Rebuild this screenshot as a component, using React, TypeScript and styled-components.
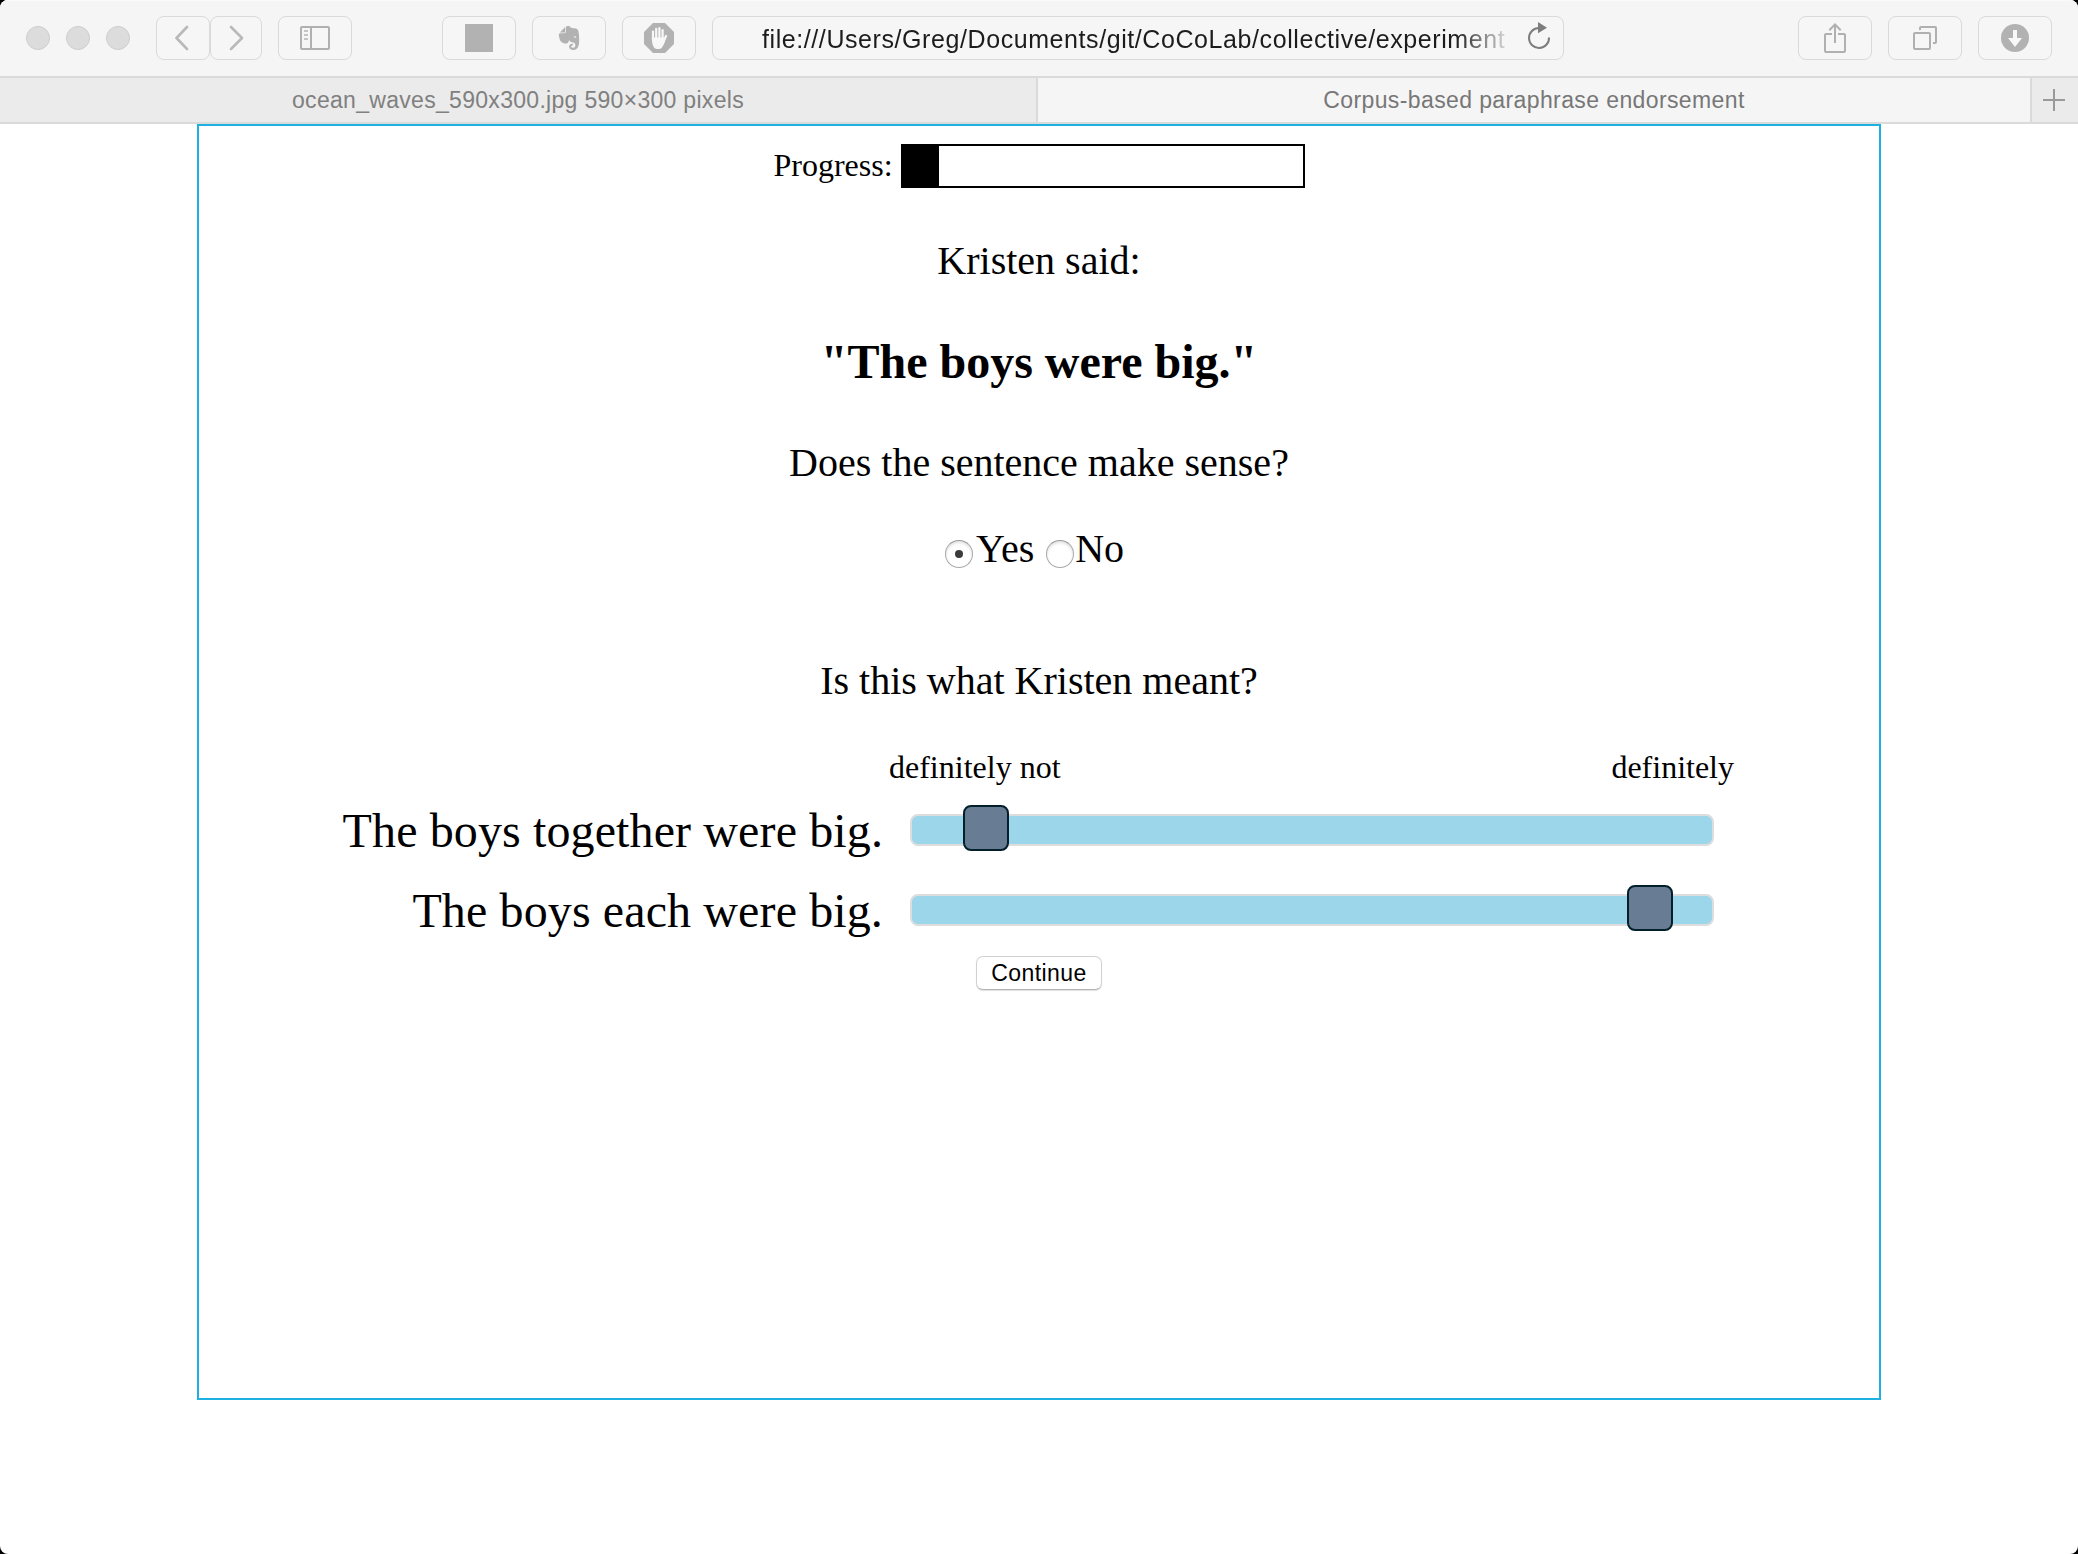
import React, { useState } from "react";
import styled, { createGlobalStyle } from "styled-components";
import { SiEvernote } from "react-icons/si";

const GlobalStyle = createGlobalStyle`
  *, *::before, *::after { box-sizing: border-box; }
  html { background: #000; }
  body { margin: 0; background: #000; }
`;

const sans = `"Liberation Sans", Arial, Helvetica, sans-serif`;
const serif = `"Liberation Serif", "Times New Roman", Times, serif`;

const BrowserWindow = styled.div`
  display: flex;
  flex-direction: column;
  width: 2078px;
  height: 1554px;
  overflow: hidden;
  border-radius: 8px;
  background: #fff;
`;

/* ---------- toolbar ---------- */

const Toolbar = styled.header`
  display: flex;
  align-items: center;
  flex: none;
  height: 78px;
  padding: 0 26px 1px 26px;
  background: #f5f5f5;
  border-top: 1px solid #fafafa;
  border-bottom: 2px solid #dadada;
`;

const TrafficLights = styled.div`
  display: flex;
  gap: 16px;
  margin-right: 26px;
`;

const Light = styled.span`
  width: 24px;
  height: 24px;
  border-radius: 50%;
  background: #dcdcdc;
  border: 1px solid #cdcdcd;
`;

const ToolButton = styled.button<{ $width?: number }>`
  display: flex;
  align-items: center;
  justify-content: center;
  flex: none;
  width: ${(p) => p.$width ?? 74}px;
  height: 44px;
  padding: 0;
  border: 1px solid #dadada;
  border-radius: 8px;
  background: #f6f6f6;
  color: #b2b2b2;

  svg {
    display: block;
  }
`;

const ButtonGroup = styled.div<{ $gap?: number; $after?: number }>`
  display: flex;
  gap: ${(p) => p.$gap ?? 16}px;
  margin-right: ${(p) => p.$after ?? 0}px;
`;

const AddressBar = styled.div`
  display: flex;
  align-items: center;
  width: 852px;
  height: 44px;
  padding: 0 12px 0 49px;
  border: 1px solid #dadada;
  border-radius: 8px;
  background: #f6f6f6;
  margin-right: 234px;
  color: #7d7d7d;

  svg {
    flex: none;
    margin-bottom: 4px;
  }
`;

const Address = styled.span`
  flex: 1;
  overflow: hidden;
  white-space: nowrap;
  padding-top: 2px;
  font: 25px/40px ${sans};
  letter-spacing: 0.58px;
  color: #1c1c1c;
  mask-image: linear-gradient(to right, #000 694px, transparent 752px);
`;

/* ---------- tabs ---------- */

const TabBar = styled.nav`
  display: flex;
  flex: none;
  height: 46px;
  border-bottom: 2px solid #dadada;
  background: #ebebeb;
`;

const Tab = styled.div<{ $width: number; $active?: boolean }>`
  width: ${(p) => p.$width}px;
  border-right: 2px solid #dadada;
  background: ${(p) => (p.$active ? "#f5f5f5" : "#ebebeb")};
  color: ${(p) => (p.$active ? "#777" : "#808080")};
  font: 23px/45px ${sans};
  letter-spacing: ${(p) => (p.$active ? 0.39 : 0.3)}px;
  text-align: center;
  white-space: nowrap;
`;

const NewTab = styled.button`
  display: flex;
  flex: 1;
  align-items: center;
  justify-content: center;
  padding: 0 2px 0 0;
  border: 0;
  background: transparent;
  color: #9a9a9a;
`;

/* ---------- experiment slide ---------- */

const Slide = styled.main`
  display: flex;
  flex-direction: column;
  align-items: center;
  width: 1684px;
  height: 1276px;
  margin-left: 197px;
  padding-top: 18px;
  border: 2px solid #1fb0e2;
  color: #000;
  font-family: ${serif};
`;

const Progress = styled.div`
  display: flex;
  align-items: center;
  gap: 8px;
  height: 44px;
  font-size: 32px;
  line-height: 42px;
`;

const ProgressLabel = styled.span`
  padding-bottom: 2px;
`;

const ProgressTrack = styled.div`
  width: 404px;
  height: 44px;
  border: 2px solid #000;
`;

const ProgressFill = styled.div`
  height: 100%;
  background: #000;
`;

const Prompt = styled.p<{ $before: number }>`
  margin: ${(p) => p.$before}px 0 0;
  font-size: 40px;
  line-height: 48px;
`;

const Sentence = styled.h1`
  margin: 49px 0 0;
  font-size: 48px;
  line-height: 56px;
  font-weight: bold;
`;

const Choices = styled.div`
  display: flex;
  align-items: flex-start;
  gap: 12px;
  width: 188px;
  height: 48px;
  margin: 38px 0 0 0;
  font-size: 40px;
  line-height: 48px;
`;

const Choice = styled.label<{ $gap: number }>`
  display: flex;
  gap: ${(p) => p.$gap}px;
`;

const Radio = styled.input`
  appearance: none;
  display: grid;
  place-items: center;
  width: 28px;
  height: 28px;
  margin: 15px 0 0;
  border: 1px solid #a9a9a9;
  border-top-color: #989898;
  border-radius: 50%;
  background: #fff;
  box-shadow: inset 0 2px 3px #e2e2e2;

  &:checked::before {
    content: "";
    width: 8px;
    height: 8px;
    border-radius: 50%;
    background: #3b3b3b;
  }
`;

const Ratings = styled.section`
  display: grid;
  grid-template-columns: 684px 804px;
  column-gap: 27px;
  align-self: flex-start;
  margin-top: 42px;
`;

const ScaleEnds = styled.div`
  grid-column: 2;
  display: flex;
  justify-content: space-between;
  height: 40px;
  margin: 0 -20px 0 -21px;
  font-size: 32px;
  line-height: 40px;
`;

const RatingLabel = styled.div`
  height: 80px;
  padding-top: 16px;
  font-size: 48px;
  line-height: 56px;
  letter-spacing: 0.12px;
  text-align: right;
  white-space: nowrap;
`;

const Track = styled.div`
  position: relative;
  height: 32px;
  margin-top: 27px;
  border: 2px solid #ddd;
  border-radius: 8px;
  background: #9bd6ea;
`;

const Handle = styled.span`
  position: absolute;
  top: -11px;
  width: 46px;
  height: 46px;
  border: 2px solid #03202a;
  border-radius: 8px;
  background: #687d94;
`;

const Continue = styled.button`
  width: 126px;
  height: 34px;
  margin: 9px 0 0 0;
  padding: 1px 0 0;
  border: 1px solid #d2d2d2;
  border-bottom-color: #b4b4b4;
  border-radius: 7px;
  background: #fff;
  box-shadow: 0 1px 1px rgba(0, 0, 0, 0.12);
  color: #000;
  font: 23px/31px ${sans};
  letter-spacing: 0.4px;
`;

/* ---------- icons ---------- */

const Chevron = ({ flip = false }: { flip?: boolean }) => (
  <svg width="16" height="26" viewBox="0 0 16 26" fill="none" stroke="#b9b9b9" strokeWidth="2.6" strokeLinecap="round" strokeLinejoin="round">
    <path d={flip ? "M3 2l11 11L3 24" : "M12 2L1.500 13l10.500 11"} />
  </svg>
);

const SidebarIcon = () => (
  <svg width="30" height="24" viewBox="0 0 30 24" fill="none" stroke="#b0b0b0" strokeWidth="2">
    <rect x="1" y="1" width="28" height="22" rx="1" />
    <path d="M11 1v22" />
    <path d="M4 5h4M4 9h4M4 13h4" stroke="#c4c4c4" />
  </svg>
);

const StopSquare = () => (
  <svg width="28" height="28">
    <rect width="28" height="28" fill="#b2b2b2" />
  </svg>
);

const HandIcon = () => (
  <svg width="30" height="30" viewBox="0 0 30 30">
    <path d="M9 0h12l9 9v12l-9 9H9l-9-9V9z" fill="#b2b2b2" />
    <g stroke="#f8f8f8" strokeLinecap="round" fill="none" strokeWidth="2.2">
      <path d="M9 8.600v9" />
      <path d="M12.200 5.800v10" />
      <path d="M15.400 5.200v10" />
      <path d="M18.600 7.200v10" />
      <path d="M22 13L18.800 20.500" />
    </g>
    <path d="M7.900 14.500h11.800v3.400l1.700-2.400c-.6 3.800-1.900 7-3.600 9.200-1.100 1.500-5.900 1.700-7.400.2-1.900-1.900-2.500-5.800-2.500-10.400z" fill="#f8f8f8" />
  </svg>
);

const ReloadIcon = () => (
  <svg width="24" height="28" viewBox="0 0 24 28">
    <path d="M12 6A10 10 0 1 0 22 15.500" fill="none" stroke="#7d7d7d" strokeWidth="2" />
    <path d="M11 0l9 5.700-9 5.500z" fill="#7d7d7d" />
  </svg>
);

const ShareIcon = () => (
  <svg width="22" height="30" viewBox="0 0 22 30" fill="none" stroke="#b0b0b0" strokeWidth="2">
    <path d="M8 11H2a1 1 0 0 0-1 1v16a1 1 0 0 0 1 1h18a1 1 0 0 0 1-1V12a1 1 0 0 0-1-1h-6" />
    <path d="M11 20V1.500M5.300 7.200L11 1.500l5.700 5.700" />
  </svg>
);

const TabsIcon = () => (
  <svg width="24" height="24" viewBox="0 0 24 24" fill="none" stroke="#b0b0b0" strokeWidth="2">
    <rect x="1" y="7" width="16" height="16" rx="1" />
    <path d="M7 4V2a1 1 0 0 1 1-1h14a1 1 0 0 1 1 1v14a1 1 0 0 1-1 1h-2" />
  </svg>
);

const DownloadIcon = () => (
  <svg width="28" height="28" viewBox="0 0 28 28">
    <circle cx="14" cy="14" r="14" fill="#b2b2b2" />
    <path d="M12 6h4v8h5l-7 9-7-9h5z" fill="#f8f8f8" />
  </svg>
);

const PlusIcon = () => (
  <svg width="22" height="22" viewBox="0 0 22 22" stroke="currentColor" strokeWidth="2">
    <path d="M11 0v22M0 11h22" />
  </svg>
);

const ratings = [
  { text: "The boys together were big.", offset: 51 },
  { text: "The boys each were big.", offset: 715 },
];

export default function App() {
  const [answer, setAnswer] = useState("Yes");
  const progress = 9;

  return (
    <>
      <GlobalStyle />
      <BrowserWindow>
        <Toolbar>
          <TrafficLights>
            <Light />
            <Light />
            <Light />
          </TrafficLights>
          <ButtonGroup $gap={0} $after={16}>
            <ToolButton $width={54} aria-label="Back"><Chevron /></ToolButton>
            <ToolButton $width={52} aria-label="Forward"><Chevron flip /></ToolButton>
          </ButtonGroup>
          <ButtonGroup $after={90}>
            <ToolButton aria-label="Sidebar"><SidebarIcon /></ToolButton>
          </ButtonGroup>
          <ButtonGroup $after={16}>
            <ToolButton aria-label="Stop"><StopSquare /></ToolButton>
            <ToolButton aria-label="Evernote"><SiEvernote size={24} /></ToolButton>
            <ToolButton aria-label="Block"><HandIcon /></ToolButton>
          </ButtonGroup>
          <AddressBar>
            <Address>file:///Users/Greg/Documents/git/CoCoLab/collective/experiment</Address>
            <ReloadIcon />
          </AddressBar>
          <ButtonGroup>
            <ToolButton aria-label="Share"><ShareIcon /></ToolButton>
            <ToolButton aria-label="Tabs"><TabsIcon /></ToolButton>
            <ToolButton aria-label="Downloads"><DownloadIcon /></ToolButton>
          </ButtonGroup>
        </Toolbar>

        <TabBar>
          <Tab $width={1038}>ocean_waves_590x300.jpg 590×300 pixels</Tab>
          <Tab $width={994} $active>Corpus-based paraphrase endorsement</Tab>
          <NewTab aria-label="New tab"><PlusIcon /></NewTab>
        </TabBar>

        <Slide>
          <Progress>
            <ProgressLabel>Progress:</ProgressLabel>
            <ProgressTrack>
              <ProgressFill style={{ width: `${progress}%` }} />
            </ProgressTrack>
          </Progress>
          <Prompt $before={49}>Kristen said:</Prompt>
          <Sentence>"The boys were big."</Sentence>
          <Prompt $before={49}>Does the sentence make sense?</Prompt>
          <Choices>
            {["Yes", "No"].map((option) => (
              <Choice key={option} $gap={option === "Yes" ? 3 : 1}>
                <Radio type="radio" name="sense" checked={answer === option} onChange={() => setAnswer(option)} />
                {option}
              </Choice>
            ))}
          </Choices>
          <Prompt $before={84}>Is this what Kristen meant?</Prompt>
          <Ratings>
            <ScaleEnds>
              <span>definitely not</span>
              <span>definitely</span>
            </ScaleEnds>
            {ratings.map((rating) => (
              <React.Fragment key={rating.text}>
                <RatingLabel>{rating.text}</RatingLabel>
                <Track>
                  <Handle style={{ left: rating.offset }} />
                </Track>
              </React.Fragment>
            ))}
          </Ratings>
          <Continue>Continue</Continue>
        </Slide>
      </BrowserWindow>
    </>
  );
}
